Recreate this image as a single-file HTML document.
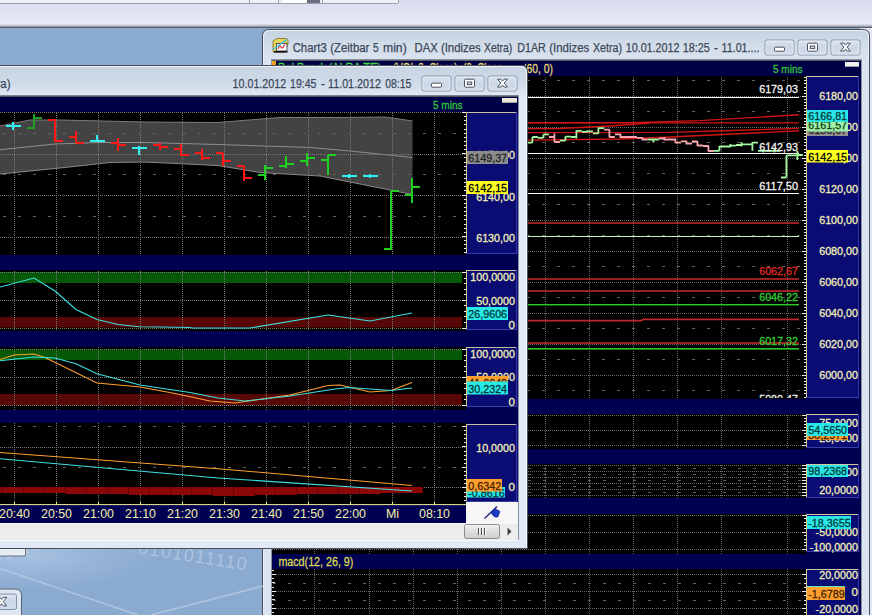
<!DOCTYPE html>
<html><head><meta charset="utf-8"><title>Chart3</title>
<style>
html,body{margin:0;padding:0;background:#dde0f0;overflow:hidden}
svg{display:block}
text{font-family:"Liberation Sans", sans-serif;}
.c{shape-rendering:crispEdges}
</style></head><body>
<svg width="872" height="615" viewBox="0 0 872 615">
<defs>
<linearGradient id="gtop" x1="0" y1="0" x2="0" y2="1"><stop offset="0" stop-color="#d8dbee"/><stop offset="0.85" stop-color="#e9ebf6"/><stop offset="1" stop-color="#e9ebf6"/></linearGradient>
<linearGradient id="gtitle" gradientUnits="userSpaceOnUse" x1="0" y1="30" x2="0" y2="60"><stop offset="0" stop-color="#c4d1e1"/><stop offset="0.5" stop-color="#d2dde9"/><stop offset="1" stop-color="#dae3ef"/></linearGradient>
<linearGradient id="gtitle2" gradientUnits="userSpaceOnUse" x1="0" y1="66" x2="0" y2="96"><stop offset="0" stop-color="#c8d4e2"/><stop offset="0.55" stop-color="#cedae8"/><stop offset="1" stop-color="#e0e8f3"/></linearGradient>
<linearGradient id="gbtn" x1="0" y1="0" x2="0" y2="1"><stop offset="0" stop-color="#dbe4f0"/><stop offset="0.5" stop-color="#ccd7e6"/><stop offset="1" stop-color="#d3dcea"/></linearGradient>
<linearGradient id="gthumb" x1="0" y1="0" x2="0" y2="1"><stop offset="0" stop-color="#f4f4f4"/><stop offset="0.5" stop-color="#dcdcdc"/><stop offset="1" stop-color="#cfcfcf"/></linearGradient>
<clipPath id="cpBack"><rect x="272" y="61" width="589" height="554"/></clipPath>
<clipPath id="cpFront"><rect x="0" y="97" width="518" height="426"/></clipPath>
</defs>

<rect x="0" y="0" width="872" height="28" fill="url(#gtop)" />
<rect x="0" y="0" width="398" height="3" fill="#eef0f6" class="c"/>
<line x1="0" y1="3.5" x2="398" y2="3.5" stroke="#9aa0b0" stroke-width="1" class="c"/>
<rect x="283" y="0" width="24" height="3" fill="#ffffff" class="c"/>
<rect x="307" y="0" width="13" height="3" fill="#6a6f80" class="c"/>
<line x1="249.5" y1="0" x2="249.5" y2="3" stroke="#9aa0b0" stroke-width="1" class="c"/>
<line x1="278.5" y1="0" x2="278.5" y2="3" stroke="#9aa0b0" stroke-width="1" class="c"/>
<line x1="322.5" y1="0" x2="322.5" y2="3" stroke="#9aa0b0" stroke-width="1" class="c"/>
<line x1="398.5" y1="0" x2="398.5" y2="3" stroke="#9aa0b0" stroke-width="1" class="c"/>
<rect x="0" y="24" width="872" height="1" fill="#d6d9e6" class="c"/>
<rect x="0" y="25" width="872" height="1" fill="#bec2ce" class="c"/>
<rect x="0" y="26" width="872" height="1" fill="#9498a2" class="c"/>
<rect x="0" y="27" width="872" height="1" fill="#5a5e66" class="c"/>
<rect x="262" y="28" width="610" height="1" fill="#4a4e56" class="c"/>
<rect x="0" y="28" width="872" height="587" fill="#8aaad0" />
<rect x="860" y="28" width="12" height="14" fill="#e2e5f2" />
<path d="M262.5 615 V36 Q262.5 29.5 269 29.5 H863 Q869.5 29.5 869.5 36 V615 Z" fill="url(#gtitle)" stroke="#4a4e58" stroke-width="1"/>
<path d="M263.5 615 V37 Q263.5 30.5 270 30.5 H862 Q868.5 30.5 868.5 37 V615" fill="none" stroke="#f4f7fb" stroke-width="1" opacity=".8"/>
<rect x="870" y="28" width="2" height="587" fill="#e2e5f2" />
<rect x="263.5" y="60" width="8" height="555" fill="#dbe5f2" />
<rect x="861" y="60" width="8" height="555" fill="#dbe5f2" />
<rect x="271" y="59" width="591" height="1" fill="#8a92a2" class="c"/>
<rect x="271" y="60" width="591" height="1" fill="#565a64" class="c"/>
<rect x="271" y="59" width="1" height="556" fill="#8a92a2" class="c"/>
<rect x="861" y="59" width="1" height="556" fill="#8c93a0" class="c"/>
<g>
<path d="M273 41 L277 38.5 H286.5 L288 40.5 V44 L284 52 H273 Z" fill="#e8d45c" stroke="#7a6a18" stroke-width=".8"/>
<rect x="276.5" y="43.5" width="10.5" height="7.5" fill="#fff" stroke="#333" stroke-width=".8"/>
<path d="M278 49 q1.5 -5 3 -2 t3.5 -2.5" fill="none" stroke="#e02020" stroke-width="1.1"/>
<path d="M273 49.5 L287 39.5" stroke="#20c0e8" stroke-width="1.2"/>
<rect x="274" y="51" width="13.5" height="1.6" fill="#111"/>
</g>
<text x="292.7" y="52" font-size="12.3" fill="#3c475a" stroke="#3c475a" stroke-width=".25" textLength="34" lengthAdjust="spacingAndGlyphs">Chart3</text>
<text x="330.3" y="52" font-size="12.3" fill="#3c475a" stroke="#3c475a" stroke-width=".25" textLength="39" lengthAdjust="spacingAndGlyphs">(Zeitbar</text>
<text x="373" y="52" font-size="12.3" fill="#3c475a" stroke="#3c475a" stroke-width=".25" textLength="5.6" lengthAdjust="spacingAndGlyphs">5</text>
<text x="383" y="52" font-size="12.3" fill="#3c475a" stroke="#3c475a" stroke-width=".25" textLength="23.7" lengthAdjust="spacingAndGlyphs">min)</text>
<text x="414.6" y="52" font-size="12.3" fill="#3c475a" stroke="#3c475a" stroke-width=".25" textLength="23.2" lengthAdjust="spacingAndGlyphs">DAX</text>
<text x="440.9" y="52" font-size="12.3" fill="#3c475a" stroke="#3c475a" stroke-width=".25" textLength="39.8" lengthAdjust="spacingAndGlyphs">(Indizes</text>
<text x="484" y="52" font-size="12.3" fill="#3c475a" stroke="#3c475a" stroke-width=".25" textLength="28.3" lengthAdjust="spacingAndGlyphs">Xetra)</text>
<text x="517.3" y="52" font-size="12.3" fill="#3c475a" stroke="#3c475a" stroke-width=".25" textLength="28.5" lengthAdjust="spacingAndGlyphs">D1AR</text>
<text x="549.3" y="52" font-size="12.3" fill="#3c475a" stroke="#3c475a" stroke-width=".25" textLength="39.9" lengthAdjust="spacingAndGlyphs">(Indizes</text>
<text x="593" y="52" font-size="12.3" fill="#3c475a" stroke="#3c475a" stroke-width=".25" textLength="29" lengthAdjust="spacingAndGlyphs">Xetra)</text>
<text x="625.7" y="52" font-size="12.3" fill="#3c475a" stroke="#3c475a" stroke-width=".25" textLength="53.8" lengthAdjust="spacingAndGlyphs">10.01.2012</text>
<text x="682.7" y="52" font-size="12.3" fill="#3c475a" stroke="#3c475a" stroke-width=".25" textLength="27" lengthAdjust="spacingAndGlyphs">18:25</text>
<text x="714" y="52" font-size="12.3" fill="#3c475a" stroke="#3c475a" stroke-width=".25" textLength="4" lengthAdjust="spacingAndGlyphs">-</text>
<text x="721.6" y="52" font-size="12.3" fill="#3c475a" stroke="#3c475a" stroke-width=".25" textLength="37.8" lengthAdjust="spacingAndGlyphs">11.01....</text>
<rect x="765.0" y="40.0" width="29" height="15" rx="2" fill="url(#gbtn)" stroke="#8794a8"/>
<rect x="766.0" y="41.0" width="27" height="13" rx="1.5" fill="none" stroke="#eef3f9" opacity=".7"/>
<rect x="774.5" y="47.2" width="10" height="4" rx="1" fill="#fff" stroke="#4a5262" stroke-width="1"/>
<rect x="798.0" y="40.0" width="29" height="15" rx="2" fill="url(#gbtn)" stroke="#8794a8"/>
<rect x="799.0" y="41.0" width="27" height="13" rx="1.5" fill="none" stroke="#eef3f9" opacity=".7"/>
<rect x="807.5" y="43.2" width="10" height="8" rx="1" fill="#fff" stroke="#4a5262" stroke-width="1"/>
<rect x="810.3" y="46.0" width="4.4" height="2.6" fill="#ccd6e4" stroke="#4a5262" stroke-width="1"/>
<rect x="831.0" y="40.0" width="29" height="15" rx="2" fill="url(#gbtn)" stroke="#8794a8"/>
<rect x="832.0" y="41.0" width="27" height="13" rx="1.5" fill="none" stroke="#eef3f9" opacity=".7"/>
<path d="M840.60 43.20 L843.90 43.20 L845.50 45.12 L847.10 43.20 L850.40 43.20 L847.15 47.10 L850.40 51.00 L847.10 51.00 L845.50 49.08 L843.90 51.00 L840.60 51.00 L843.85 47.10 Z" fill="#fff" stroke="#4a5262" stroke-width="1" stroke-linejoin="round"/>
<g clip-path="url(#cpBack)">
<rect x="271" y="60" width="590" height="555" fill="#000052" class="c"/>
<rect x="271" y="60" width="590" height="16" fill="#000048" class="c"/>
<rect x="271" y="76" width="535" height="323" fill="#000" class="c"/>
<rect x="271" y="414" width="535" height="35" fill="#000" class="c"/>
<rect x="271" y="464" width="535" height="34" fill="#000" class="c"/>
<rect x="271" y="514" width="535" height="40" fill="#000" class="c"/>
<rect x="271" y="569" width="535" height="46" fill="#000" class="c"/>
<rect x="806" y="76" width="53" height="322" fill="#0b0b74" class="c"/>
<rect x="806" y="414" width="53" height="34" fill="#0b0b74" class="c"/>
<rect x="806" y="464" width="53" height="34" fill="#0b0b74" class="c"/>
<rect x="806" y="514" width="53" height="38" fill="#0b0b74" class="c"/>
<rect x="806" y="569" width="53" height="47" fill="#0b0b74" class="c"/>
<line x1="314.5" y1="77" x2="314.5" y2="399" stroke="#666666" stroke-width="1" stroke-dasharray="1 1" class="c"/>
<line x1="369.5" y1="77" x2="369.5" y2="399" stroke="#666666" stroke-width="1" stroke-dasharray="1 1" class="c"/>
<line x1="413.5" y1="77" x2="413.5" y2="399" stroke="#666666" stroke-width="1" stroke-dasharray="1 1" class="c"/>
<line x1="457.5" y1="77" x2="457.5" y2="399" stroke="#666666" stroke-width="1" stroke-dasharray="1 1" class="c"/>
<line x1="501.5" y1="77" x2="501.5" y2="399" stroke="#666666" stroke-width="1" stroke-dasharray="1 1" class="c"/>
<line x1="545.5" y1="77" x2="545.5" y2="399" stroke="#666666" stroke-width="1" stroke-dasharray="1 1" class="c"/>
<line x1="589.5" y1="77" x2="589.5" y2="399" stroke="#666666" stroke-width="1" stroke-dasharray="1 1" class="c"/>
<line x1="633.5" y1="77" x2="633.5" y2="399" stroke="#666666" stroke-width="1" stroke-dasharray="1 1" class="c"/>
<line x1="677.5" y1="77" x2="677.5" y2="399" stroke="#666666" stroke-width="1" stroke-dasharray="1 1" class="c"/>
<line x1="721.5" y1="77" x2="721.5" y2="399" stroke="#666666" stroke-width="1" stroke-dasharray="1 1" class="c"/>
<line x1="787.5" y1="77" x2="787.5" y2="399" stroke="#666666" stroke-width="1" stroke-dasharray="1 1" class="c"/>
<line x1="314.5" y1="415" x2="314.5" y2="449" stroke="#666666" stroke-width="1" stroke-dasharray="1 1" class="c"/>
<line x1="369.5" y1="415" x2="369.5" y2="449" stroke="#666666" stroke-width="1" stroke-dasharray="1 1" class="c"/>
<line x1="413.5" y1="415" x2="413.5" y2="449" stroke="#666666" stroke-width="1" stroke-dasharray="1 1" class="c"/>
<line x1="457.5" y1="415" x2="457.5" y2="449" stroke="#666666" stroke-width="1" stroke-dasharray="1 1" class="c"/>
<line x1="501.5" y1="415" x2="501.5" y2="449" stroke="#666666" stroke-width="1" stroke-dasharray="1 1" class="c"/>
<line x1="545.5" y1="415" x2="545.5" y2="449" stroke="#666666" stroke-width="1" stroke-dasharray="1 1" class="c"/>
<line x1="589.5" y1="415" x2="589.5" y2="449" stroke="#666666" stroke-width="1" stroke-dasharray="1 1" class="c"/>
<line x1="633.5" y1="415" x2="633.5" y2="449" stroke="#666666" stroke-width="1" stroke-dasharray="1 1" class="c"/>
<line x1="677.5" y1="415" x2="677.5" y2="449" stroke="#666666" stroke-width="1" stroke-dasharray="1 1" class="c"/>
<line x1="721.5" y1="415" x2="721.5" y2="449" stroke="#666666" stroke-width="1" stroke-dasharray="1 1" class="c"/>
<line x1="787.5" y1="415" x2="787.5" y2="449" stroke="#666666" stroke-width="1" stroke-dasharray="1 1" class="c"/>
<line x1="314.5" y1="465" x2="314.5" y2="498" stroke="#666666" stroke-width="1" stroke-dasharray="1 1" class="c"/>
<line x1="369.5" y1="465" x2="369.5" y2="498" stroke="#666666" stroke-width="1" stroke-dasharray="1 1" class="c"/>
<line x1="413.5" y1="465" x2="413.5" y2="498" stroke="#666666" stroke-width="1" stroke-dasharray="1 1" class="c"/>
<line x1="457.5" y1="465" x2="457.5" y2="498" stroke="#666666" stroke-width="1" stroke-dasharray="1 1" class="c"/>
<line x1="501.5" y1="465" x2="501.5" y2="498" stroke="#666666" stroke-width="1" stroke-dasharray="1 1" class="c"/>
<line x1="545.5" y1="465" x2="545.5" y2="498" stroke="#666666" stroke-width="1" stroke-dasharray="1 1" class="c"/>
<line x1="589.5" y1="465" x2="589.5" y2="498" stroke="#666666" stroke-width="1" stroke-dasharray="1 1" class="c"/>
<line x1="633.5" y1="465" x2="633.5" y2="498" stroke="#666666" stroke-width="1" stroke-dasharray="1 1" class="c"/>
<line x1="677.5" y1="465" x2="677.5" y2="498" stroke="#666666" stroke-width="1" stroke-dasharray="1 1" class="c"/>
<line x1="721.5" y1="465" x2="721.5" y2="498" stroke="#666666" stroke-width="1" stroke-dasharray="1 1" class="c"/>
<line x1="787.5" y1="465" x2="787.5" y2="498" stroke="#666666" stroke-width="1" stroke-dasharray="1 1" class="c"/>
<line x1="314.5" y1="515" x2="314.5" y2="554" stroke="#666666" stroke-width="1" stroke-dasharray="1 1" class="c"/>
<line x1="369.5" y1="515" x2="369.5" y2="554" stroke="#666666" stroke-width="1" stroke-dasharray="1 1" class="c"/>
<line x1="413.5" y1="515" x2="413.5" y2="554" stroke="#666666" stroke-width="1" stroke-dasharray="1 1" class="c"/>
<line x1="457.5" y1="515" x2="457.5" y2="554" stroke="#666666" stroke-width="1" stroke-dasharray="1 1" class="c"/>
<line x1="501.5" y1="515" x2="501.5" y2="554" stroke="#666666" stroke-width="1" stroke-dasharray="1 1" class="c"/>
<line x1="545.5" y1="515" x2="545.5" y2="554" stroke="#666666" stroke-width="1" stroke-dasharray="1 1" class="c"/>
<line x1="589.5" y1="515" x2="589.5" y2="554" stroke="#666666" stroke-width="1" stroke-dasharray="1 1" class="c"/>
<line x1="633.5" y1="515" x2="633.5" y2="554" stroke="#666666" stroke-width="1" stroke-dasharray="1 1" class="c"/>
<line x1="677.5" y1="515" x2="677.5" y2="554" stroke="#666666" stroke-width="1" stroke-dasharray="1 1" class="c"/>
<line x1="721.5" y1="515" x2="721.5" y2="554" stroke="#666666" stroke-width="1" stroke-dasharray="1 1" class="c"/>
<line x1="787.5" y1="515" x2="787.5" y2="554" stroke="#666666" stroke-width="1" stroke-dasharray="1 1" class="c"/>
<line x1="314.5" y1="569" x2="314.5" y2="615" stroke="#666666" stroke-width="1" stroke-dasharray="1 1" class="c"/>
<line x1="369.5" y1="569" x2="369.5" y2="615" stroke="#666666" stroke-width="1" stroke-dasharray="1 1" class="c"/>
<line x1="413.5" y1="569" x2="413.5" y2="615" stroke="#666666" stroke-width="1" stroke-dasharray="1 1" class="c"/>
<line x1="457.5" y1="569" x2="457.5" y2="615" stroke="#666666" stroke-width="1" stroke-dasharray="1 1" class="c"/>
<line x1="501.5" y1="569" x2="501.5" y2="615" stroke="#666666" stroke-width="1" stroke-dasharray="1 1" class="c"/>
<line x1="545.5" y1="569" x2="545.5" y2="615" stroke="#666666" stroke-width="1" stroke-dasharray="1 1" class="c"/>
<line x1="589.5" y1="569" x2="589.5" y2="615" stroke="#666666" stroke-width="1" stroke-dasharray="1 1" class="c"/>
<line x1="633.5" y1="569" x2="633.5" y2="615" stroke="#666666" stroke-width="1" stroke-dasharray="1 1" class="c"/>
<line x1="677.5" y1="569" x2="677.5" y2="615" stroke="#666666" stroke-width="1" stroke-dasharray="1 1" class="c"/>
<line x1="721.5" y1="569" x2="721.5" y2="615" stroke="#666666" stroke-width="1" stroke-dasharray="1 1" class="c"/>
<line x1="787.5" y1="569" x2="787.5" y2="615" stroke="#666666" stroke-width="1" stroke-dasharray="1 1" class="c"/>
<line x1="272" y1="96.5" x2="802" y2="96.5" stroke="#666666" stroke-width="1" stroke-dasharray="1 1" class="c"/>
<line x1="272" y1="127.5" x2="802" y2="127.5" stroke="#666666" stroke-width="1" stroke-dasharray="1 1" class="c"/>
<line x1="272" y1="158.5" x2="802" y2="158.5" stroke="#666666" stroke-width="1" stroke-dasharray="1 1" class="c"/>
<line x1="272" y1="189.5" x2="802" y2="189.5" stroke="#666666" stroke-width="1" stroke-dasharray="1 1" class="c"/>
<line x1="272" y1="220.5" x2="802" y2="220.5" stroke="#666666" stroke-width="1" stroke-dasharray="1 1" class="c"/>
<line x1="272" y1="251.5" x2="802" y2="251.5" stroke="#666666" stroke-width="1" stroke-dasharray="1 1" class="c"/>
<line x1="272" y1="282.5" x2="802" y2="282.5" stroke="#666666" stroke-width="1" stroke-dasharray="1 1" class="c"/>
<line x1="272" y1="313.5" x2="802" y2="313.5" stroke="#666666" stroke-width="1" stroke-dasharray="1 1" class="c"/>
<line x1="272" y1="344.5" x2="802" y2="344.5" stroke="#666666" stroke-width="1" stroke-dasharray="1 1" class="c"/>
<line x1="272" y1="375.5" x2="802" y2="375.5" stroke="#666666" stroke-width="1" stroke-dasharray="1 1" class="c"/>
<line x1="257" y1="80.5" x2="802" y2="80.5" stroke="#606060" stroke-width="1" stroke-dasharray="3 12" class="c"/>
<line x1="257" y1="111.5" x2="802" y2="111.5" stroke="#606060" stroke-width="1" stroke-dasharray="3 12" class="c"/>
<line x1="257" y1="142.5" x2="802" y2="142.5" stroke="#606060" stroke-width="1" stroke-dasharray="3 12" class="c"/>
<line x1="257" y1="173.5" x2="802" y2="173.5" stroke="#606060" stroke-width="1" stroke-dasharray="3 12" class="c"/>
<line x1="257" y1="204.5" x2="802" y2="204.5" stroke="#606060" stroke-width="1" stroke-dasharray="3 12" class="c"/>
<line x1="257" y1="235.5" x2="802" y2="235.5" stroke="#606060" stroke-width="1" stroke-dasharray="3 12" class="c"/>
<line x1="257" y1="266.5" x2="802" y2="266.5" stroke="#606060" stroke-width="1" stroke-dasharray="3 12" class="c"/>
<line x1="257" y1="297.5" x2="802" y2="297.5" stroke="#606060" stroke-width="1" stroke-dasharray="3 12" class="c"/>
<line x1="257" y1="328.5" x2="802" y2="328.5" stroke="#606060" stroke-width="1" stroke-dasharray="3 12" class="c"/>
<line x1="257" y1="359.5" x2="802" y2="359.5" stroke="#606060" stroke-width="1" stroke-dasharray="3 12" class="c"/>
<line x1="257" y1="390.5" x2="802" y2="390.5" stroke="#606060" stroke-width="1" stroke-dasharray="3 12" class="c"/>
<line x1="272" y1="415.5" x2="802" y2="415.5" stroke="#666666" stroke-width="1" stroke-dasharray="1 1" class="c"/>
<line x1="272" y1="430.5" x2="802" y2="430.5" stroke="#666666" stroke-width="1" stroke-dasharray="1 1" class="c"/>
<line x1="272" y1="445.5" x2="802" y2="445.5" stroke="#666666" stroke-width="1" stroke-dasharray="1 1" class="c"/>
<line x1="272" y1="465.5" x2="802" y2="465.5" stroke="#666666" stroke-width="1" stroke-dasharray="1 1" class="c"/>
<line x1="272" y1="471.5" x2="802" y2="471.5" stroke="#666666" stroke-width="1" stroke-dasharray="1 1" class="c"/>
<line x1="272" y1="477.5" x2="802" y2="477.5" stroke="#666666" stroke-width="1" stroke-dasharray="1 1" class="c"/>
<line x1="272" y1="483.5" x2="802" y2="483.5" stroke="#666666" stroke-width="1" stroke-dasharray="1 1" class="c"/>
<line x1="272" y1="489.5" x2="802" y2="489.5" stroke="#666666" stroke-width="1" stroke-dasharray="1 1" class="c"/>
<line x1="272" y1="495.5" x2="802" y2="495.5" stroke="#666666" stroke-width="1" stroke-dasharray="1 1" class="c"/>
<line x1="258" y1="468.5" x2="802" y2="468.5" stroke="#606060" stroke-width="1" stroke-dasharray="3 12" class="c"/>
<line x1="258" y1="474.5" x2="802" y2="474.5" stroke="#606060" stroke-width="1" stroke-dasharray="3 12" class="c"/>
<line x1="258" y1="480.5" x2="802" y2="480.5" stroke="#606060" stroke-width="1" stroke-dasharray="3 12" class="c"/>
<line x1="258" y1="486.5" x2="802" y2="486.5" stroke="#606060" stroke-width="1" stroke-dasharray="3 12" class="c"/>
<line x1="258" y1="492.5" x2="802" y2="492.5" stroke="#606060" stroke-width="1" stroke-dasharray="3 12" class="c"/>
<line x1="272" y1="515.5" x2="802" y2="515.5" stroke="#666666" stroke-width="1" stroke-dasharray="1 1" class="c"/>
<line x1="272" y1="532.5" x2="802" y2="532.5" stroke="#666666" stroke-width="1" stroke-dasharray="1 1" class="c"/>
<line x1="272" y1="549.5" x2="802" y2="549.5" stroke="#666666" stroke-width="1" stroke-dasharray="1 1" class="c"/>
<line x1="272" y1="574.5" x2="802" y2="574.5" stroke="#666666" stroke-width="1" stroke-dasharray="1 1" class="c"/>
<line x1="272" y1="591.5" x2="802" y2="591.5" stroke="#666666" stroke-width="1" stroke-dasharray="1 1" class="c"/>
<line x1="272" y1="608.5" x2="802" y2="608.5" stroke="#666666" stroke-width="1" stroke-dasharray="1 1" class="c"/>
<line x1="258" y1="583.5" x2="802" y2="583.5" stroke="#606060" stroke-width="1" stroke-dasharray="3 12" class="c"/>
<line x1="258" y1="600.5" x2="802" y2="600.5" stroke="#606060" stroke-width="1" stroke-dasharray="3 12" class="c"/>
<line x1="271" y1="97.5" x2="799" y2="97.5" stroke="#fff" stroke-width="1" class="c"/>
<line x1="271" y1="153.5" x2="799" y2="153.5" stroke="#fff" stroke-width="1" class="c"/>
<line x1="271" y1="193.5" x2="799" y2="193.5" stroke="#fff" stroke-width="1" class="c"/>
<rect x="271" y="222.2" width="528" height="1.6" fill="#c02828" />
<line x1="271" y1="236.5" x2="799" y2="236.5" stroke="#c0f4b0" stroke-width="1" class="c"/>
<rect x="271" y="278.2" width="528" height="1.6" fill="#c02828" />
<rect x="271" y="290.2" width="528" height="1.6" fill="#c02828" />
<rect x="271" y="304" width="528" height="1" fill="#2cc82c" class="c"/>
<rect x="271" y="305" width="528" height="1" fill="#145c14" class="c"/>
<polyline points="271,320.7 641,320.7 643.5,319.3 799,319.3" stroke="#c02828" stroke-width="1.8" fill="none" />
<rect x="271" y="342.2" width="528" height="1.6" fill="#c02828" />
<rect x="271" y="348" width="528" height="1" fill="#2cc82c" class="c"/>
<rect x="271" y="349" width="528" height="1" fill="#1c801c" class="c"/>
<polyline points="271,122.6 632,122.6 700,120.6 799,114.8" stroke="#d41414" stroke-width="1.4" fill="none" />
<polyline points="271,122.9 799,122.9" stroke="#d41414" stroke-width="1.3" fill="none" />
<polyline points="271,130.3 560,128.5 610,126 650,123.2" stroke="#d41414" stroke-width="1.3" fill="none" />
<polyline points="271,132.9 670,132.4 799,128.4" stroke="#d41414" stroke-width="1.4" fill="none" />
<polyline points="271,143.3 620,139 670,137 799,130.8" stroke="#d41414" stroke-width="1.4" fill="none" />
<path d="M532.4 137 V142.6 M526.9 142.6 H532.4 M532.4 137 H537.9" stroke="#a4f8a0" stroke-width="1.8" fill="none"/>
<path d="M543.4 134.4 V137.9 M537.9 137.9 H543.4 M543.4 134.4 H548.9" stroke="#a4f8a0" stroke-width="1.8" fill="none"/>
<path d="M554.4 133.4 V142 M548.9 137 H554.4 M554.4 142 H559.9" stroke="#f8a8b0" stroke-width="1.8" fill="none"/>
<path d="M565.4 136.6 V140.6 M559.9 140.6 H565.4 M565.4 136.6 H570.9" stroke="#a4f8a0" stroke-width="1.8" fill="none"/>
<path d="M576.4 130.3 V138.5 M570.9 137 H576.4 M576.4 130.9 H581.9" stroke="#a4f8a0" stroke-width="1.8" fill="none"/>
<path d="M587.4 130.3 V132.3 M581.9 131.9 H587.4 M587.4 131.3 H592.9" stroke="#a4f8a0" stroke-width="1.8" fill="none"/>
<path d="M598.4 127.2 V133.4 M592.9 133.4 H598.4 M598.4 128.2 H603.9" stroke="#a4f8a0" stroke-width="1.8" fill="none"/>
<path d="M609.4 129.2 V137.5 M603.9 129.6 H609.4 M609.4 137 H614.9" stroke="#f8a8b0" stroke-width="1.8" fill="none"/>
<path d="M620.4 133.4 V137.9 M614.9 134.4 H620.4 M620.4 137 H625.9" stroke="#f8a8b0" stroke-width="1.8" fill="none"/>
<path d="M631.4 136.5 V137.5 M625.9 137 H631.4 M631.4 137 H636.9" stroke="#f8a8b0" stroke-width="1.8" fill="none"/>
<path d="M642.4 137.5 V140.6 M636.9 137.9 H642.4 M642.4 139.5 H647.9" stroke="#f8a8b0" stroke-width="1.8" fill="none"/>
<path d="M653.4 139.1 V142.6 M647.9 139.5 H653.4 M653.4 139.5 H658.9" stroke="#a4f8a0" stroke-width="1.8" fill="none"/>
<path d="M664.4 137 V140.6 M658.9 138.5 H664.4 M664.4 139.5 H669.9" stroke="#f8a8b0" stroke-width="1.8" fill="none"/>
<path d="M675.4 138.5 V143.3 M669.9 139.5 H675.4 M675.4 142.6 H680.9" stroke="#f8a8b0" stroke-width="1.8" fill="none"/>
<path d="M686.4 140.5 V144.5 M680.9 141.3 H686.4 M686.4 143.5 H691.9" stroke="#f8a8b0" stroke-width="1.8" fill="none"/>
<path d="M697.4 141 V146 M691.9 141.5 H697.4 M697.4 145.5 H702.9" stroke="#f8a8b0" stroke-width="1.8" fill="none"/>
<path d="M708.4 145.6 V151.6 M702.9 146 H708.4 M708.4 151 H713.9" stroke="#f8a8b0" stroke-width="1.8" fill="none"/>
<path d="M719.4 146.1 V151.1 M713.9 150.8 H719.4 M719.4 146.5 H724.9" stroke="#a4f8a0" stroke-width="1.8" fill="none"/>
<path d="M730.4 143.9 V147.3 M724.9 146.5 H730.4 M730.4 145.6 H735.9" stroke="#a4f8a0" stroke-width="1.8" fill="none"/>
<path d="M741.4 142.2 V146.5 M735.9 145 H741.4 M741.4 144.4 H746.9" stroke="#a4f8a0" stroke-width="1.8" fill="none"/>
<path d="M752.4 142 V150.8 M746.9 144.4 H752.4 M752.4 142.7 H757.9" stroke="#a4f8a0" stroke-width="1.8" fill="none"/>
<path d="M763.4 149 V152.5 M757.9 150.8 H763.4 M763.4 150.8 H768.9" stroke="#a4f8a0" stroke-width="1.8" fill="none"/>
<path d="M774.4 149 V152.5 M768.9 150.8 H774.4 M774.4 150.8 H779.9" stroke="#a4f8a0" stroke-width="1.8" fill="none"/>
<path d="M786.4 155.4 V177.5 M780.9 177.5 H786.4 M786.4 155.4 H791.9" stroke="#a4f8a0" stroke-width="1.8" fill="none"/>
<path d="M797.4 150.8 V160 M791.9 155.4 H797.4 M797.4 155 H802.9" stroke="#a4f8a0" stroke-width="1.8" fill="none"/>
<text x="798" y="93" font-size="11.6" fill="#f4f4f4" text-anchor="end"  textLength="38.8" lengthAdjust="spacingAndGlyphs" stroke="#f4f4f4" stroke-width=".3">6179,03</text>
<text x="798" y="151" font-size="11.6" fill="#f4f4f4" text-anchor="end"  textLength="38.8" lengthAdjust="spacingAndGlyphs" stroke="#f4f4f4" stroke-width=".3">6142,93</text>
<text x="798" y="190" font-size="11.6" fill="#f4f4f4" text-anchor="end"  textLength="38.8" lengthAdjust="spacingAndGlyphs" stroke="#f4f4f4" stroke-width=".3">6117,50</text>
<text x="798" y="275" font-size="11.6" fill="#e02828" text-anchor="end"  textLength="38.8" lengthAdjust="spacingAndGlyphs" stroke="#e02828" stroke-width=".3">6062,67</text>
<text x="798" y="301" font-size="11.6" fill="#30d030" text-anchor="end"  textLength="38.8" lengthAdjust="spacingAndGlyphs" stroke="#30d030" stroke-width=".3">6046,22</text>
<text x="798" y="345" font-size="11.6" fill="#30d030" text-anchor="end"  textLength="38.8" lengthAdjust="spacingAndGlyphs" stroke="#30d030" stroke-width=".3">6017,32</text>
<clipPath id="cpMain"><rect x="271" y="76" width="535" height="322"/></clipPath>
<text x="798" y="403.3" font-size="11.6" fill="#f4f4f4" text-anchor="end" clip-path="url(#cpMain)" textLength="38.8" lengthAdjust="spacingAndGlyphs" stroke="#f4f4f4" stroke-width=".3">5980,47</text>
<text x="773" y="72.5" font-size="11.8" fill="#30c838" text-anchor="start" textLength="29.5" lengthAdjust="spacingAndGlyphs" stroke="#30c838" stroke-width=".3">5 mins</text>
<text x="523" y="73" font-size="12.3" fill="#e6dc70" text-anchor="start" textLength="30" lengthAdjust="spacingAndGlyphs" stroke="#e6dc70" stroke-width=".3">(60, 0)</text>
<rect x="845" y="62" width="14" height="5" fill="#f2f2f2" class="c"/>
<rect x="845" y="66" width="14" height="1" fill="#a0a0a0" class="c"/>
<rect x="272" y="61" width="4" height="5" fill="#f0a020" class="c"/>
<text x="278" y="72.2" font-size="12.3" fill="#40d848" text-anchor="start" textLength="103" lengthAdjust="spacingAndGlyphs" stroke="#40d848" stroke-width=".3">Bol Bands(ALRA TE)</text>
<text x="393" y="72.2" font-size="12.3" fill="#e6dc70" text-anchor="start" textLength="112" lengthAdjust="spacingAndGlyphs" stroke="#e6dc70" stroke-width=".3">(VOL 2, Close), (2, Close,</text>
<text x="278.4" y="566" font-size="12.3" fill="#dcd850" text-anchor="start" textLength="75" lengthAdjust="spacingAndGlyphs" stroke="#dcd850" stroke-width=".3">macd(12, 26, 9)</text>
<rect x="806" y="76" width="1" height="322" fill="#d8c890" class="c"/>
<rect x="806" y="76" width="53" height="1" fill="#d0c8a0" class="c"/>
<rect x="858" y="76" width="1" height="322" fill="#3038a0" class="c"/>
<rect x="806" y="397" width="53" height="1" fill="#3840a8" class="c"/>
<rect x="806" y="414" width="1" height="34" fill="#d8c890" class="c"/>
<rect x="806" y="414" width="53" height="1" fill="#d0c8a0" class="c"/>
<rect x="858" y="414" width="1" height="34" fill="#3038a0" class="c"/>
<rect x="806" y="447" width="53" height="1" fill="#3840a8" class="c"/>
<rect x="806" y="464" width="1" height="34" fill="#d8c890" class="c"/>
<rect x="806" y="464" width="53" height="1" fill="#d0c8a0" class="c"/>
<rect x="858" y="464" width="1" height="34" fill="#3038a0" class="c"/>
<rect x="806" y="497" width="53" height="1" fill="#3840a8" class="c"/>
<rect x="806" y="514" width="1" height="38" fill="#d8c890" class="c"/>
<rect x="806" y="514" width="53" height="1" fill="#d0c8a0" class="c"/>
<rect x="858" y="514" width="1" height="38" fill="#3038a0" class="c"/>
<rect x="806" y="551" width="53" height="1" fill="#3840a8" class="c"/>
<rect x="806" y="569" width="1" height="47" fill="#d8c890" class="c"/>
<rect x="806" y="569" width="53" height="1" fill="#d0c8a0" class="c"/>
<rect x="858" y="569" width="1" height="47" fill="#3038a0" class="c"/>
<rect x="804" y="77" width="2" height="1" fill="#f0f0f0" class="c"/>
<rect x="804" y="80" width="2" height="1" fill="#f0f0f0" class="c"/>
<rect x="804" y="83" width="2" height="1" fill="#f0f0f0" class="c"/>
<rect x="804" y="87" width="2" height="1" fill="#f0f0f0" class="c"/>
<rect x="804" y="90" width="2" height="1" fill="#f0f0f0" class="c"/>
<rect x="804" y="93" width="2" height="1" fill="#f0f0f0" class="c"/>
<rect x="802" y="96" width="4" height="1" fill="#f0f0f0" class="c"/>
<rect x="804" y="99" width="2" height="1" fill="#f0f0f0" class="c"/>
<rect x="804" y="102" width="2" height="1" fill="#f0f0f0" class="c"/>
<rect x="804" y="105" width="2" height="1" fill="#f0f0f0" class="c"/>
<rect x="804" y="108" width="2" height="1" fill="#f0f0f0" class="c"/>
<rect x="804" y="111" width="2" height="1" fill="#f0f0f0" class="c"/>
<rect x="804" y="114" width="2" height="1" fill="#f0f0f0" class="c"/>
<rect x="804" y="118" width="2" height="1" fill="#f0f0f0" class="c"/>
<rect x="804" y="121" width="2" height="1" fill="#f0f0f0" class="c"/>
<rect x="804" y="124" width="2" height="1" fill="#f0f0f0" class="c"/>
<rect x="802" y="127" width="4" height="1" fill="#f0f0f0" class="c"/>
<rect x="804" y="130" width="2" height="1" fill="#f0f0f0" class="c"/>
<rect x="804" y="133" width="2" height="1" fill="#f0f0f0" class="c"/>
<rect x="804" y="136" width="2" height="1" fill="#f0f0f0" class="c"/>
<rect x="804" y="139" width="2" height="1" fill="#f0f0f0" class="c"/>
<rect x="804" y="142" width="2" height="1" fill="#f0f0f0" class="c"/>
<rect x="804" y="145" width="2" height="1" fill="#f0f0f0" class="c"/>
<rect x="804" y="149" width="2" height="1" fill="#f0f0f0" class="c"/>
<rect x="804" y="152" width="2" height="1" fill="#f0f0f0" class="c"/>
<rect x="804" y="155" width="2" height="1" fill="#f0f0f0" class="c"/>
<rect x="802" y="158" width="4" height="1" fill="#f0f0f0" class="c"/>
<rect x="804" y="161" width="2" height="1" fill="#f0f0f0" class="c"/>
<rect x="804" y="164" width="2" height="1" fill="#f0f0f0" class="c"/>
<rect x="804" y="167" width="2" height="1" fill="#f0f0f0" class="c"/>
<rect x="804" y="170" width="2" height="1" fill="#f0f0f0" class="c"/>
<rect x="804" y="173" width="2" height="1" fill="#f0f0f0" class="c"/>
<rect x="804" y="176" width="2" height="1" fill="#f0f0f0" class="c"/>
<rect x="804" y="180" width="2" height="1" fill="#f0f0f0" class="c"/>
<rect x="804" y="183" width="2" height="1" fill="#f0f0f0" class="c"/>
<rect x="804" y="186" width="2" height="1" fill="#f0f0f0" class="c"/>
<rect x="802" y="189" width="4" height="1" fill="#f0f0f0" class="c"/>
<rect x="804" y="192" width="2" height="1" fill="#f0f0f0" class="c"/>
<rect x="804" y="195" width="2" height="1" fill="#f0f0f0" class="c"/>
<rect x="804" y="198" width="2" height="1" fill="#f0f0f0" class="c"/>
<rect x="804" y="201" width="2" height="1" fill="#f0f0f0" class="c"/>
<rect x="804" y="204" width="2" height="1" fill="#f0f0f0" class="c"/>
<rect x="804" y="207" width="2" height="1" fill="#f0f0f0" class="c"/>
<rect x="804" y="211" width="2" height="1" fill="#f0f0f0" class="c"/>
<rect x="804" y="214" width="2" height="1" fill="#f0f0f0" class="c"/>
<rect x="804" y="217" width="2" height="1" fill="#f0f0f0" class="c"/>
<rect x="802" y="220" width="4" height="1" fill="#f0f0f0" class="c"/>
<rect x="804" y="223" width="2" height="1" fill="#f0f0f0" class="c"/>
<rect x="804" y="226" width="2" height="1" fill="#f0f0f0" class="c"/>
<rect x="804" y="229" width="2" height="1" fill="#f0f0f0" class="c"/>
<rect x="804" y="232" width="2" height="1" fill="#f0f0f0" class="c"/>
<rect x="804" y="235" width="2" height="1" fill="#f0f0f0" class="c"/>
<rect x="804" y="238" width="2" height="1" fill="#f0f0f0" class="c"/>
<rect x="804" y="242" width="2" height="1" fill="#f0f0f0" class="c"/>
<rect x="804" y="245" width="2" height="1" fill="#f0f0f0" class="c"/>
<rect x="804" y="248" width="2" height="1" fill="#f0f0f0" class="c"/>
<rect x="802" y="251" width="4" height="1" fill="#f0f0f0" class="c"/>
<rect x="804" y="254" width="2" height="1" fill="#f0f0f0" class="c"/>
<rect x="804" y="257" width="2" height="1" fill="#f0f0f0" class="c"/>
<rect x="804" y="260" width="2" height="1" fill="#f0f0f0" class="c"/>
<rect x="804" y="263" width="2" height="1" fill="#f0f0f0" class="c"/>
<rect x="804" y="266" width="2" height="1" fill="#f0f0f0" class="c"/>
<rect x="804" y="269" width="2" height="1" fill="#f0f0f0" class="c"/>
<rect x="804" y="273" width="2" height="1" fill="#f0f0f0" class="c"/>
<rect x="804" y="276" width="2" height="1" fill="#f0f0f0" class="c"/>
<rect x="804" y="279" width="2" height="1" fill="#f0f0f0" class="c"/>
<rect x="802" y="282" width="4" height="1" fill="#f0f0f0" class="c"/>
<rect x="804" y="285" width="2" height="1" fill="#f0f0f0" class="c"/>
<rect x="804" y="288" width="2" height="1" fill="#f0f0f0" class="c"/>
<rect x="804" y="291" width="2" height="1" fill="#f0f0f0" class="c"/>
<rect x="804" y="294" width="2" height="1" fill="#f0f0f0" class="c"/>
<rect x="804" y="297" width="2" height="1" fill="#f0f0f0" class="c"/>
<rect x="804" y="300" width="2" height="1" fill="#f0f0f0" class="c"/>
<rect x="804" y="304" width="2" height="1" fill="#f0f0f0" class="c"/>
<rect x="804" y="307" width="2" height="1" fill="#f0f0f0" class="c"/>
<rect x="804" y="310" width="2" height="1" fill="#f0f0f0" class="c"/>
<rect x="802" y="313" width="4" height="1" fill="#f0f0f0" class="c"/>
<rect x="804" y="316" width="2" height="1" fill="#f0f0f0" class="c"/>
<rect x="804" y="319" width="2" height="1" fill="#f0f0f0" class="c"/>
<rect x="804" y="322" width="2" height="1" fill="#f0f0f0" class="c"/>
<rect x="804" y="325" width="2" height="1" fill="#f0f0f0" class="c"/>
<rect x="804" y="328" width="2" height="1" fill="#f0f0f0" class="c"/>
<rect x="804" y="331" width="2" height="1" fill="#f0f0f0" class="c"/>
<rect x="804" y="335" width="2" height="1" fill="#f0f0f0" class="c"/>
<rect x="804" y="338" width="2" height="1" fill="#f0f0f0" class="c"/>
<rect x="804" y="341" width="2" height="1" fill="#f0f0f0" class="c"/>
<rect x="802" y="344" width="4" height="1" fill="#f0f0f0" class="c"/>
<rect x="804" y="347" width="2" height="1" fill="#f0f0f0" class="c"/>
<rect x="804" y="350" width="2" height="1" fill="#f0f0f0" class="c"/>
<rect x="804" y="353" width="2" height="1" fill="#f0f0f0" class="c"/>
<rect x="804" y="356" width="2" height="1" fill="#f0f0f0" class="c"/>
<rect x="804" y="359" width="2" height="1" fill="#f0f0f0" class="c"/>
<rect x="804" y="362" width="2" height="1" fill="#f0f0f0" class="c"/>
<rect x="804" y="366" width="2" height="1" fill="#f0f0f0" class="c"/>
<rect x="804" y="369" width="2" height="1" fill="#f0f0f0" class="c"/>
<rect x="804" y="372" width="2" height="1" fill="#f0f0f0" class="c"/>
<rect x="802" y="375" width="4" height="1" fill="#f0f0f0" class="c"/>
<rect x="804" y="378" width="2" height="1" fill="#f0f0f0" class="c"/>
<rect x="804" y="381" width="2" height="1" fill="#f0f0f0" class="c"/>
<rect x="804" y="384" width="2" height="1" fill="#f0f0f0" class="c"/>
<rect x="804" y="387" width="2" height="1" fill="#f0f0f0" class="c"/>
<rect x="804" y="390" width="2" height="1" fill="#f0f0f0" class="c"/>
<rect x="804" y="393" width="2" height="1" fill="#f0f0f0" class="c"/>
<rect x="804" y="397" width="2" height="1" fill="#f0f0f0" class="c"/>
<rect x="802" y="415" width="4" height="1" fill="#f0f0f0" class="c"/>
<rect x="804" y="418" width="2" height="1" fill="#f0f0f0" class="c"/>
<rect x="804" y="421" width="2" height="1" fill="#f0f0f0" class="c"/>
<rect x="804" y="424" width="2" height="1" fill="#f0f0f0" class="c"/>
<rect x="804" y="427" width="2" height="1" fill="#f0f0f0" class="c"/>
<rect x="802" y="430" width="4" height="1" fill="#f0f0f0" class="c"/>
<rect x="804" y="433" width="2" height="1" fill="#f0f0f0" class="c"/>
<rect x="804" y="436" width="2" height="1" fill="#f0f0f0" class="c"/>
<rect x="804" y="439" width="2" height="1" fill="#f0f0f0" class="c"/>
<rect x="804" y="442" width="2" height="1" fill="#f0f0f0" class="c"/>
<rect x="802" y="445" width="4" height="1" fill="#f0f0f0" class="c"/>
<rect x="802" y="465" width="4" height="1" fill="#f0f0f0" class="c"/>
<rect x="802" y="468" width="4" height="1" fill="#f0f0f0" class="c"/>
<rect x="802" y="471" width="4" height="1" fill="#f0f0f0" class="c"/>
<rect x="802" y="474" width="4" height="1" fill="#f0f0f0" class="c"/>
<rect x="802" y="477" width="4" height="1" fill="#f0f0f0" class="c"/>
<rect x="802" y="480" width="4" height="1" fill="#f0f0f0" class="c"/>
<rect x="802" y="483" width="4" height="1" fill="#f0f0f0" class="c"/>
<rect x="802" y="486" width="4" height="1" fill="#f0f0f0" class="c"/>
<rect x="802" y="489" width="4" height="1" fill="#f0f0f0" class="c"/>
<rect x="802" y="492" width="4" height="1" fill="#f0f0f0" class="c"/>
<rect x="802" y="495" width="4" height="1" fill="#f0f0f0" class="c"/>
<rect x="802" y="515" width="4" height="1" fill="#f0f0f0" class="c"/>
<rect x="804" y="518" width="2" height="1" fill="#f0f0f0" class="c"/>
<rect x="804" y="522" width="2" height="1" fill="#f0f0f0" class="c"/>
<rect x="804" y="525" width="2" height="1" fill="#f0f0f0" class="c"/>
<rect x="804" y="528" width="2" height="1" fill="#f0f0f0" class="c"/>
<rect x="802" y="532" width="4" height="1" fill="#f0f0f0" class="c"/>
<rect x="804" y="535" width="2" height="1" fill="#f0f0f0" class="c"/>
<rect x="804" y="539" width="2" height="1" fill="#f0f0f0" class="c"/>
<rect x="804" y="542" width="2" height="1" fill="#f0f0f0" class="c"/>
<rect x="804" y="545" width="2" height="1" fill="#f0f0f0" class="c"/>
<rect x="802" y="549" width="4" height="1" fill="#f0f0f0" class="c"/>
<rect x="802" y="574" width="4" height="1" fill="#f0f0f0" class="c"/>
<rect x="804" y="578" width="2" height="1" fill="#f0f0f0" class="c"/>
<rect x="804" y="583" width="2" height="1" fill="#f0f0f0" class="c"/>
<rect x="804" y="587" width="2" height="1" fill="#f0f0f0" class="c"/>
<rect x="802" y="591" width="4" height="1" fill="#f0f0f0" class="c"/>
<rect x="804" y="595" width="2" height="1" fill="#f0f0f0" class="c"/>
<rect x="804" y="600" width="2" height="1" fill="#f0f0f0" class="c"/>
<rect x="804" y="604" width="2" height="1" fill="#f0f0f0" class="c"/>
<rect x="802" y="608" width="4" height="1" fill="#f0f0f0" class="c"/>
<rect x="804" y="612" width="2" height="1" fill="#f0f0f0" class="c"/>
<rect x="272" y="570" width="2" height="1" fill="#f0f0f0" class="c"/>
<rect x="272" y="574" width="4" height="1" fill="#f0f0f0" class="c"/>
<rect x="272" y="578" width="2" height="1" fill="#f0f0f0" class="c"/>
<rect x="272" y="582" width="3" height="1" fill="#f0f0f0" class="c"/>
<rect x="272" y="587" width="2" height="1" fill="#f0f0f0" class="c"/>
<rect x="272" y="591" width="4" height="1" fill="#f0f0f0" class="c"/>
<rect x="272" y="595" width="2" height="1" fill="#f0f0f0" class="c"/>
<rect x="272" y="599" width="3" height="1" fill="#f0f0f0" class="c"/>
<rect x="272" y="604" width="2" height="1" fill="#f0f0f0" class="c"/>
<rect x="272" y="608" width="4" height="1" fill="#f0f0f0" class="c"/>
<rect x="272" y="612" width="2" height="1" fill="#f0f0f0" class="c"/>
<text x="858" y="100.4" font-size="11.6" fill="#f3f0b4" text-anchor="end"  textLength="38.8" lengthAdjust="spacingAndGlyphs" stroke="#f3f0b4" stroke-width=".3">6180,00</text>
<text x="858" y="131.4" font-size="11.6" fill="#f3f0b4" text-anchor="end"  textLength="38.8" lengthAdjust="spacingAndGlyphs" stroke="#f3f0b4" stroke-width=".3">6160,00</text>
<text x="858" y="162.4" font-size="11.6" fill="#f3f0b4" text-anchor="end"  textLength="38.8" lengthAdjust="spacingAndGlyphs" stroke="#f3f0b4" stroke-width=".3">6140,00</text>
<text x="858" y="193.4" font-size="11.6" fill="#f3f0b4" text-anchor="end"  textLength="38.8" lengthAdjust="spacingAndGlyphs" stroke="#f3f0b4" stroke-width=".3">6120,00</text>
<text x="858" y="224.4" font-size="11.6" fill="#f3f0b4" text-anchor="end"  textLength="38.8" lengthAdjust="spacingAndGlyphs" stroke="#f3f0b4" stroke-width=".3">6100,00</text>
<text x="858" y="255.4" font-size="11.6" fill="#f3f0b4" text-anchor="end"  textLength="38.8" lengthAdjust="spacingAndGlyphs" stroke="#f3f0b4" stroke-width=".3">6080,00</text>
<text x="858" y="286.4" font-size="11.6" fill="#f3f0b4" text-anchor="end"  textLength="38.8" lengthAdjust="spacingAndGlyphs" stroke="#f3f0b4" stroke-width=".3">6060,00</text>
<text x="858" y="317.4" font-size="11.6" fill="#f3f0b4" text-anchor="end"  textLength="38.8" lengthAdjust="spacingAndGlyphs" stroke="#f3f0b4" stroke-width=".3">6040,00</text>
<text x="858" y="348.4" font-size="11.6" fill="#f3f0b4" text-anchor="end"  textLength="38.8" lengthAdjust="spacingAndGlyphs" stroke="#f3f0b4" stroke-width=".3">6020,00</text>
<text x="858" y="379.4" font-size="11.6" fill="#f3f0b4" text-anchor="end"  textLength="38.8" lengthAdjust="spacingAndGlyphs" stroke="#f3f0b4" stroke-width=".3">6000,00</text>
<rect x="807" y="123" width="41" height="13" fill="#909090" />
<text x="808.3" y="134" font-size="11.6" fill="#222" text-anchor="start"  textLength="38.8" lengthAdjust="spacingAndGlyphs" stroke="#222" stroke-width=".3">6156,67</text>
<rect x="807" y="118.5" width="41" height="13" fill="#9ef0a8" />
<text x="808.3" y="128.8" font-size="11.6" fill="#104010" text-anchor="start"  textLength="38.8" lengthAdjust="spacingAndGlyphs" stroke="#104010" stroke-width=".3">6161,57</text>
<rect x="807" y="110" width="41" height="12" fill="#28e8e8" />
<text x="808.3" y="120.2" font-size="11.6" fill="#003838" text-anchor="start"  textLength="38.8" lengthAdjust="spacingAndGlyphs" stroke="#003838" stroke-width=".3">6166,81</text>
<rect x="807" y="150" width="41" height="12.5" fill="#ffff20" />
<text x="808.3" y="160.7" font-size="11.6" fill="#000" text-anchor="start"  textLength="38.8" lengthAdjust="spacingAndGlyphs" stroke="#000" stroke-width=".3">6142,15</text>
<text x="858" y="426.7" font-size="11.6" fill="#f3f0b4" text-anchor="end"  textLength="38.8" lengthAdjust="spacingAndGlyphs" stroke="#f3f0b4" stroke-width=".3">75,0000</text>
<text x="858" y="441.8" font-size="11.6" fill="#f3f0b4" text-anchor="end"  textLength="38.8" lengthAdjust="spacingAndGlyphs" stroke="#f3f0b4" stroke-width=".3">25,0000</text>
<rect x="807" y="427.5" width="41" height="12.5" fill="#ffa030" />
<text x="808.3" y="438.5" font-size="11.6" fill="#402000" text-anchor="start"  textLength="38.8" lengthAdjust="spacingAndGlyphs" stroke="#402000" stroke-width=".3">38,2971</text>
<rect x="807" y="423" width="41" height="13" fill="#28e8e8" />
<text x="808.3" y="434.2" font-size="11.6" fill="#003838" text-anchor="start"  textLength="38.8" lengthAdjust="spacingAndGlyphs" stroke="#003838" stroke-width=".3">54,5650</text>
<text x="858" y="475.5" font-size="11.6" fill="#f3f0b4" text-anchor="end"  textLength="44.7" lengthAdjust="spacingAndGlyphs" stroke="#f3f0b4" stroke-width=".3">100,0000</text>
<text x="858" y="493.7" font-size="11.6" fill="#f3f0b4" text-anchor="end"  textLength="38.8" lengthAdjust="spacingAndGlyphs" stroke="#f3f0b4" stroke-width=".3">20,0000</text>
<rect x="807" y="465" width="41" height="12" fill="#28e8e8" />
<text x="808.3" y="475.2" font-size="11.6" fill="#003838" text-anchor="start"  textLength="38.8" lengthAdjust="spacingAndGlyphs" stroke="#003838" stroke-width=".3">98,2368</text>
<text x="858" y="536.3" font-size="11.6" fill="#f3f0b4" text-anchor="end"  textLength="42.4" lengthAdjust="spacingAndGlyphs" stroke="#f3f0b4" stroke-width=".3">-50,0000</text>
<text x="858" y="550.8" font-size="11.6" fill="#f3f0b4" text-anchor="end"  textLength="48.3" lengthAdjust="spacingAndGlyphs" stroke="#f3f0b4" stroke-width=".3">-100,0000</text>
<rect x="807" y="516" width="44" height="13" fill="#28e8e8" />
<text x="808.3" y="527.2" font-size="11.6" fill="#003838" text-anchor="start"  textLength="42.4" lengthAdjust="spacingAndGlyphs" stroke="#003838" stroke-width=".3">-18,3655</text>
<text x="858" y="579.2" font-size="11.6" fill="#f3f0b4" text-anchor="end"  textLength="38.8" lengthAdjust="spacingAndGlyphs" stroke="#f3f0b4" stroke-width=".3">20,0000</text>
<text x="858" y="595.7" font-size="11.6" fill="#f3f0b4" text-anchor="end"  stroke="#f3f0b4" stroke-width=".3">0</text>
<text x="858" y="612.8" font-size="11.6" fill="#f3f0b4" text-anchor="end"  textLength="42.4" lengthAdjust="spacingAndGlyphs" stroke="#f3f0b4" stroke-width=".3">-20,0000</text>
<rect x="807" y="586" width="38" height="2" fill="#60e8c0" class="c"/>
<rect x="807" y="587" width="38" height="13" fill="#ffa030" />
<text x="808.3" y="598.2" font-size="11.6" fill="#402000" text-anchor="start"  textLength="36.4" lengthAdjust="spacingAndGlyphs" stroke="#402000" stroke-width=".3">-1,6789</text>
</g>
<defs><radialGradient id="glow" cx=".5" cy=".5" r=".5"><stop offset="0" stop-color="#a6c0e0"/><stop offset="1" stop-color="#8aaad0"/></radialGradient></defs>
<ellipse cx="30" cy="556" rx="130" ry="34" fill="url(#glow)"/>
<g opacity=".55">
<text x="0" y="0" font-size="18" fill="#c9d9ec" transform="translate(131,552.5) rotate(8.8)" letter-spacing="1.5">.0101011110</text>
<text x="0" y="0" font-size="14" fill="#c9d9ec" transform="translate(-4,562) rotate(-16)" letter-spacing="1.5">01010</text>
</g>
<path d="M0 568.5 L138 615 M263 586 L151 615" stroke="#b6cbe4" stroke-width="1.6" fill="none" opacity=".8"/>
<path d="M-2 548 H25.5 V555 Q25.5 556 24 556 H-2 Z" fill="#e8edf5" stroke="#6a7280"/>
<path d="M-2 589 H15 Q21.5 589 21.5 595.5 V616 H-2 Z" fill="#dde6f2" stroke="#5a626e"/>
<rect x="-6.5" y="594" width="23" height="15.5" rx="2" fill="url(#gbtn)" stroke="#8794a8"/>
<path d="M-3.40 597.40 L0.00 597.40 L1.60 599.44 L3.20 597.40 L6.60 597.40 L3.30 601.60 L6.60 605.80 L3.20 605.80 L1.60 603.76 L0.00 605.80 L-3.40 605.80 L-0.10 601.60 Z" fill="#fff" stroke="#4a5262" stroke-width="1" stroke-linejoin="round"/>
<path d="M-3 65.5 H521 Q527.5 65.5 527.5 72 V548.5 H-3 Z" fill="url(#gtitle2)" stroke="#4a4e58"/>
<path d="M0 66.5 H520 Q526.5 66.5 526.5 73 V547.5 H0" fill="none" stroke="#f6f9fc" opacity=".85"/>
<rect x="0" y="96" width="527" height="452" fill="#e0e9f5" />
<rect x="527" y="73" width="1" height="475" fill="#4a4e58" class="c"/>
<rect x="0" y="548" width="528" height="1" fill="#4a4e58" class="c"/>
<rect x="526" y="96" width="1" height="452" fill="#f6f9fc" class="c"/>
<rect x="0" y="95" width="519" height="1" fill="#7c8390" class="c"/>
<rect x="0" y="96" width="519" height="1" fill="#50545c" class="c"/>
<rect x="518" y="95" width="1" height="446" fill="#8c93a0" class="c"/>
<rect x="0" y="540" width="519" height="1" fill="#f8fafc" class="c"/>
<text x="-3.5" y="87.6" font-size="12.3" fill="#3c475a" stroke="#3c475a" stroke-width=".25" textLength="14" lengthAdjust="spacingAndGlyphs">ra)</text>
<text x="232.6" y="87.6" font-size="12.3" fill="#3c475a" stroke="#3c475a" stroke-width=".25" textLength="53.5" lengthAdjust="spacingAndGlyphs">10.01.2012</text>
<text x="290.1" y="87.6" font-size="12.3" fill="#3c475a" stroke="#3c475a" stroke-width=".25" textLength="26.3" lengthAdjust="spacingAndGlyphs">19:45</text>
<text x="320.9" y="87.6" font-size="12.3" fill="#3c475a" stroke="#3c475a" stroke-width=".25" textLength="3.9" lengthAdjust="spacingAndGlyphs">-</text>
<text x="328" y="87.6" font-size="12.3" fill="#3c475a" stroke="#3c475a" stroke-width=".25" textLength="53" lengthAdjust="spacingAndGlyphs">11.01.2012</text>
<text x="385.2" y="87.6" font-size="12.3" fill="#3c475a" stroke="#3c475a" stroke-width=".25" textLength="26" lengthAdjust="spacingAndGlyphs">08:15</text>
<rect x="422.0" y="76.0" width="29" height="15" rx="2" fill="url(#gbtn)" stroke="#8794a8"/>
<rect x="423.0" y="77.0" width="27" height="13" rx="1.5" fill="none" stroke="#eef3f9" opacity=".7"/>
<rect x="431.5" y="83.2" width="10" height="4" rx="1" fill="#fff" stroke="#4a5262" stroke-width="1"/>
<rect x="455.0" y="76.0" width="29" height="15" rx="2" fill="url(#gbtn)" stroke="#8794a8"/>
<rect x="456.0" y="77.0" width="27" height="13" rx="1.5" fill="none" stroke="#eef3f9" opacity=".7"/>
<rect x="464.5" y="79.2" width="10" height="8" rx="1" fill="#fff" stroke="#4a5262" stroke-width="1"/>
<rect x="467.3" y="82.0" width="4.4" height="2.6" fill="#ccd6e4" stroke="#4a5262" stroke-width="1"/>
<rect x="488.0" y="76.0" width="29" height="15" rx="2" fill="url(#gbtn)" stroke="#8794a8"/>
<rect x="489.0" y="77.0" width="27" height="13" rx="1.5" fill="none" stroke="#eef3f9" opacity=".7"/>
<path d="M497.60 79.20 L500.90 79.20 L502.50 81.12 L504.10 79.20 L507.40 79.20 L504.15 83.10 L507.40 87.00 L504.10 87.00 L502.50 85.08 L500.90 87.00 L497.60 87.00 L500.85 83.10 Z" fill="#fff" stroke="#4a5262" stroke-width="1" stroke-linejoin="round"/>
<g clip-path="url(#cpFront)">
<rect x="0" y="96" width="518" height="427" fill="#000052" class="c"/>
<rect x="0" y="96" width="518" height="16" fill="#000048" class="c"/>
<rect x="0" y="112" width="466" height="143" fill="#000" class="c"/>
<rect x="0" y="270" width="466" height="61" fill="#000" class="c"/>
<rect x="0" y="347" width="466" height="63" fill="#000" class="c"/>
<rect x="0" y="423" width="466" height="82" fill="#000" class="c"/>
<rect x="466" y="112" width="52" height="142" fill="#0b0b74" class="c"/>
<rect x="466" y="270" width="52" height="60" fill="#0b0b74" class="c"/>
<rect x="466" y="347" width="52" height="60" fill="#0b0b74" class="c"/>
<rect x="466" y="424" width="52" height="78" fill="#0b0b74" class="c"/>
<polygon points="0,126 30,120 60,120 145,122 218,122.5 280,117.5 340,117.5 385,117 412.5,121 412.5,194.5 390,190 320,176 260,172.5 218,165.5 145,162 110,162.5 60,168 0,174" fill="#434343"/>
<polyline points="0,126 30,120 60,120 145,122 218,122.5 280,117.5 340,117.5 385,117 412.5,121" stroke="#7c7c7c" stroke-width="1" fill="none" />
<polyline points="0,174 60,168 110,162.5 145,162 218,165.5 260,172.5 320,176 390,190 412.5,194.5" stroke="#8a8a8a" stroke-width="1" fill="none" />
<polyline points="0,149.7 55,144 100,142.5 145,142.5 218,144.5 310,147.5 350,151 412.5,157.5" stroke="#8e8e8e" stroke-width="1" fill="none" />
<rect x="0" y="272" width="462" height="11" fill="#055805" class="c"/>
<rect x="0" y="317" width="462" height="10.5" fill="#580707" />
<rect x="0" y="349.5" width="462" height="10.5" fill="#055805" />
<rect x="0" y="394" width="462" height="11.3" fill="#580707" />
<line x1="14.5" y1="113" x2="14.5" y2="255" stroke="#787878" stroke-width="1" stroke-dasharray="1 1" class="c"/>
<line x1="56.5" y1="113" x2="56.5" y2="255" stroke="#787878" stroke-width="1" stroke-dasharray="1 1" class="c"/>
<line x1="98.5" y1="113" x2="98.5" y2="255" stroke="#787878" stroke-width="1" stroke-dasharray="1 1" class="c"/>
<line x1="140.5" y1="113" x2="140.5" y2="255" stroke="#787878" stroke-width="1" stroke-dasharray="1 1" class="c"/>
<line x1="182.5" y1="113" x2="182.5" y2="255" stroke="#787878" stroke-width="1" stroke-dasharray="1 1" class="c"/>
<line x1="224.5" y1="113" x2="224.5" y2="255" stroke="#787878" stroke-width="1" stroke-dasharray="1 1" class="c"/>
<line x1="266.5" y1="113" x2="266.5" y2="255" stroke="#787878" stroke-width="1" stroke-dasharray="1 1" class="c"/>
<line x1="308.5" y1="113" x2="308.5" y2="255" stroke="#787878" stroke-width="1" stroke-dasharray="1 1" class="c"/>
<line x1="350.5" y1="113" x2="350.5" y2="255" stroke="#787878" stroke-width="1" stroke-dasharray="1 1" class="c"/>
<line x1="392.5" y1="113" x2="392.5" y2="255" stroke="#787878" stroke-width="1" stroke-dasharray="1 1" class="c"/>
<line x1="434.5" y1="113" x2="434.5" y2="255" stroke="#787878" stroke-width="1" stroke-dasharray="1 1" class="c"/>
<line x1="14.5" y1="271" x2="14.5" y2="331" stroke="#787878" stroke-width="1" stroke-dasharray="1 1" class="c"/>
<line x1="56.5" y1="271" x2="56.5" y2="331" stroke="#787878" stroke-width="1" stroke-dasharray="1 1" class="c"/>
<line x1="98.5" y1="271" x2="98.5" y2="331" stroke="#787878" stroke-width="1" stroke-dasharray="1 1" class="c"/>
<line x1="140.5" y1="271" x2="140.5" y2="331" stroke="#787878" stroke-width="1" stroke-dasharray="1 1" class="c"/>
<line x1="182.5" y1="271" x2="182.5" y2="331" stroke="#787878" stroke-width="1" stroke-dasharray="1 1" class="c"/>
<line x1="224.5" y1="271" x2="224.5" y2="331" stroke="#787878" stroke-width="1" stroke-dasharray="1 1" class="c"/>
<line x1="266.5" y1="271" x2="266.5" y2="331" stroke="#787878" stroke-width="1" stroke-dasharray="1 1" class="c"/>
<line x1="308.5" y1="271" x2="308.5" y2="331" stroke="#787878" stroke-width="1" stroke-dasharray="1 1" class="c"/>
<line x1="350.5" y1="271" x2="350.5" y2="331" stroke="#787878" stroke-width="1" stroke-dasharray="1 1" class="c"/>
<line x1="392.5" y1="271" x2="392.5" y2="331" stroke="#787878" stroke-width="1" stroke-dasharray="1 1" class="c"/>
<line x1="434.5" y1="271" x2="434.5" y2="331" stroke="#787878" stroke-width="1" stroke-dasharray="1 1" class="c"/>
<line x1="14.5" y1="347" x2="14.5" y2="410" stroke="#787878" stroke-width="1" stroke-dasharray="1 1" class="c"/>
<line x1="56.5" y1="347" x2="56.5" y2="410" stroke="#787878" stroke-width="1" stroke-dasharray="1 1" class="c"/>
<line x1="98.5" y1="347" x2="98.5" y2="410" stroke="#787878" stroke-width="1" stroke-dasharray="1 1" class="c"/>
<line x1="140.5" y1="347" x2="140.5" y2="410" stroke="#787878" stroke-width="1" stroke-dasharray="1 1" class="c"/>
<line x1="182.5" y1="347" x2="182.5" y2="410" stroke="#787878" stroke-width="1" stroke-dasharray="1 1" class="c"/>
<line x1="224.5" y1="347" x2="224.5" y2="410" stroke="#787878" stroke-width="1" stroke-dasharray="1 1" class="c"/>
<line x1="266.5" y1="347" x2="266.5" y2="410" stroke="#787878" stroke-width="1" stroke-dasharray="1 1" class="c"/>
<line x1="308.5" y1="347" x2="308.5" y2="410" stroke="#787878" stroke-width="1" stroke-dasharray="1 1" class="c"/>
<line x1="350.5" y1="347" x2="350.5" y2="410" stroke="#787878" stroke-width="1" stroke-dasharray="1 1" class="c"/>
<line x1="392.5" y1="347" x2="392.5" y2="410" stroke="#787878" stroke-width="1" stroke-dasharray="1 1" class="c"/>
<line x1="434.5" y1="347" x2="434.5" y2="410" stroke="#787878" stroke-width="1" stroke-dasharray="1 1" class="c"/>
<line x1="14.5" y1="423" x2="14.5" y2="505" stroke="#787878" stroke-width="1" stroke-dasharray="1 1" class="c"/>
<line x1="56.5" y1="423" x2="56.5" y2="505" stroke="#787878" stroke-width="1" stroke-dasharray="1 1" class="c"/>
<line x1="98.5" y1="423" x2="98.5" y2="505" stroke="#787878" stroke-width="1" stroke-dasharray="1 1" class="c"/>
<line x1="140.5" y1="423" x2="140.5" y2="505" stroke="#787878" stroke-width="1" stroke-dasharray="1 1" class="c"/>
<line x1="182.5" y1="423" x2="182.5" y2="505" stroke="#787878" stroke-width="1" stroke-dasharray="1 1" class="c"/>
<line x1="224.5" y1="423" x2="224.5" y2="505" stroke="#787878" stroke-width="1" stroke-dasharray="1 1" class="c"/>
<line x1="266.5" y1="423" x2="266.5" y2="505" stroke="#787878" stroke-width="1" stroke-dasharray="1 1" class="c"/>
<line x1="308.5" y1="423" x2="308.5" y2="505" stroke="#787878" stroke-width="1" stroke-dasharray="1 1" class="c"/>
<line x1="350.5" y1="423" x2="350.5" y2="505" stroke="#787878" stroke-width="1" stroke-dasharray="1 1" class="c"/>
<line x1="392.5" y1="423" x2="392.5" y2="505" stroke="#787878" stroke-width="1" stroke-dasharray="1 1" class="c"/>
<line x1="434.5" y1="423" x2="434.5" y2="505" stroke="#787878" stroke-width="1" stroke-dasharray="1 1" class="c"/>
<line x1="0" y1="112.5" x2="466" y2="112.5" stroke="#787878" stroke-width="1" stroke-dasharray="1 1" class="c"/>
<line x1="0" y1="154.5" x2="466" y2="154.5" stroke="#787878" stroke-width="1" stroke-dasharray="1 1" class="c"/>
<line x1="0" y1="195.5" x2="466" y2="195.5" stroke="#787878" stroke-width="1" stroke-dasharray="1 1" class="c"/>
<line x1="0" y1="237.5" x2="466" y2="237.5" stroke="#787878" stroke-width="1" stroke-dasharray="1 1" class="c"/>
<line x1="-12" y1="133.5" x2="462" y2="133.5" stroke="#606060" stroke-width="1" stroke-dasharray="3 12" class="c"/>
<line x1="-12" y1="174.5" x2="462" y2="174.5" stroke="#606060" stroke-width="1" stroke-dasharray="3 12" class="c"/>
<line x1="-12" y1="216.5" x2="462" y2="216.5" stroke="#606060" stroke-width="1" stroke-dasharray="3 12" class="c"/>
<line x1="0" y1="272.5" x2="466" y2="272.5" stroke="#787878" stroke-width="1" stroke-dasharray="1 1" class="c"/>
<line x1="0" y1="300.5" x2="466" y2="300.5" stroke="#787878" stroke-width="1" stroke-dasharray="1 1" class="c"/>
<line x1="0" y1="328.5" x2="466" y2="328.5" stroke="#787878" stroke-width="1" stroke-dasharray="1 1" class="c"/>
<line x1="0" y1="349.5" x2="466" y2="349.5" stroke="#787878" stroke-width="1" stroke-dasharray="1 1" class="c"/>
<line x1="0" y1="377.5" x2="466" y2="377.5" stroke="#787878" stroke-width="1" stroke-dasharray="1 1" class="c"/>
<line x1="0" y1="405.5" x2="466" y2="405.5" stroke="#787878" stroke-width="1" stroke-dasharray="1 1" class="c"/>
<line x1="0" y1="447.5" x2="466" y2="447.5" stroke="#787878" stroke-width="1" stroke-dasharray="1 1" class="c"/>
<line x1="0" y1="487.5" x2="466" y2="487.5" stroke="#787878" stroke-width="1" stroke-dasharray="1 1" class="c"/>
<line x1="-12" y1="426.5" x2="462" y2="426.5" stroke="#606060" stroke-width="1" stroke-dasharray="3 12" class="c"/>
<line x1="-12" y1="467.5" x2="462" y2="467.5" stroke="#606060" stroke-width="1" stroke-dasharray="3 12" class="c"/>
<path d="M13 121.7 V130 M5.5 126 H13 M13 126 H20.5" stroke="#30f0f0" stroke-width="2" fill="none" class="c"/>
<path d="M34 114 V128.5 M26.5 128 H34 M34 117.5 H41.5" stroke="#20a020" stroke-width="2" fill="none" class="c"/>
<path d="M55 119 V141.5 M47.5 119.5 H55 M55 141 H62.5" stroke="#ff1818" stroke-width="2" fill="none" class="c"/>
<path d="M76 131 V143 M68.5 136.7 H76 M76 142.5 H83.5" stroke="#ff1818" stroke-width="2" fill="none" class="c"/>
<path d="M97 135 V141.5 M89.5 141 H97 M97 141 H104.5" stroke="#30f0f0" stroke-width="2" fill="none" class="c"/>
<path d="M118 138 V151 M110.5 143 H118 M118 145 H125.5" stroke="#ff1818" stroke-width="2" fill="none" class="c"/>
<path d="M139 146 V155 M131.5 147.5 H139 M139 147.5 H146.5" stroke="#30f0f0" stroke-width="2" fill="none" class="c"/>
<path d="M160 143 V150 M152.5 145 H160 M160 147 H167.5" stroke="#ff1818" stroke-width="2" fill="none" class="c"/>
<path d="M181 144 V155.5 M173.5 148.7 H181 M181 154.5 H188.5" stroke="#ff1818" stroke-width="2" fill="none" class="c"/>
<path d="M202 149 V159.5 M194.5 153 H202 M202 158 H209.5" stroke="#ff1818" stroke-width="2" fill="none" class="c"/>
<path d="M223 152.5 V166 M215.5 153 H223 M223 161 H230.5" stroke="#ff1818" stroke-width="2" fill="none" class="c"/>
<path d="M244 165.5 V180.5 M236.5 166 H244 M244 178 H251.5" stroke="#ff1818" stroke-width="2" fill="none" class="c"/>
<path d="M265 164.5 V179.5 M257.5 175 H265 M265 167.5 H272.5" stroke="#20d020" stroke-width="2" fill="none" class="c"/>
<path d="M286 155.5 V167.5 M278.5 166 H286 M286 164 H293.5" stroke="#20d020" stroke-width="2" fill="none" class="c"/>
<path d="M307 153 V165.5 M299.5 161 H307 M307 158 H314.5" stroke="#20d020" stroke-width="2" fill="none" class="c"/>
<path d="M328 154.5 V175 M320.5 160 H328 M328 155 H335.5" stroke="#20d020" stroke-width="2" fill="none" class="c"/>
<path d="M349 173.5 V177.5 M341.5 175.5 H349 M349 175.5 H356.5" stroke="#30f0f0" stroke-width="2" fill="none" class="c"/>
<path d="M370 173.5 V177.5 M362.5 175.5 H370 M370 175.5 H377.5" stroke="#30f0f0" stroke-width="2" fill="none" class="c"/>
<path d="M391 190.5 V249.5 M383.5 249 H391 M391 191 H398.5" stroke="#20d020" stroke-width="2" fill="none" class="c"/>
<path d="M412 178 V202.5 M404.5 194.5 H412 M412 187 H419.5" stroke="#20d020" stroke-width="2" fill="none" class="c"/>
<polyline points="0,287 34,278 55,291 76,309.5 97,319.5 118,324.5 139,326.7 160,327 190,327.5 192,328 250,328 328,315 370,321 412,313" stroke="#3fe0e0" stroke-width="1.1" fill="none" />
<polyline points="0,359.5 14,355 34,354 45,357.5 97,383 140,387 175,393.5 210,401 235,403 290,395 328,385.5 340,385 370,392 391,390.5 412,382.5" stroke="#ffa030" stroke-width="1.1" fill="none" />
<polyline points="0,360.7 34,357 55,358 76,363.7 97,373.7 140,385 190,392.5 218,398 245,401 290,396 335,389 349,387.5 391,390.5 412,388" stroke="#3fe0e0" stroke-width="1.1" fill="none" />
<rect x="-18" y="487" width="21" height="6" fill="#8c0808" class="c"/>
<rect x="2" y="487" width="1" height="6" fill="#700000" class="c"/>
<rect x="3" y="487" width="21" height="6" fill="#8c0808" class="c"/>
<rect x="23" y="487" width="1" height="6" fill="#700000" class="c"/>
<rect x="24" y="487" width="21" height="6" fill="#8c0808" class="c"/>
<rect x="44" y="487" width="1" height="6" fill="#700000" class="c"/>
<rect x="45" y="487" width="21" height="6" fill="#8c0808" class="c"/>
<rect x="65" y="487" width="1" height="6" fill="#700000" class="c"/>
<rect x="66" y="487" width="21" height="6.5" fill="#8c0808" class="c"/>
<rect x="86" y="487" width="1" height="6.5" fill="#700000" class="c"/>
<rect x="87" y="487" width="21" height="6.5" fill="#8c0808" class="c"/>
<rect x="107" y="487" width="1" height="6.5" fill="#700000" class="c"/>
<rect x="108" y="487" width="21" height="7" fill="#8c0808" class="c"/>
<rect x="128" y="487" width="1" height="7" fill="#700000" class="c"/>
<rect x="129" y="487" width="21" height="7.5" fill="#8c0808" class="c"/>
<rect x="149" y="487" width="1" height="7.5" fill="#700000" class="c"/>
<rect x="150" y="487" width="21" height="7.5" fill="#8c0808" class="c"/>
<rect x="170" y="487" width="1" height="7.5" fill="#700000" class="c"/>
<rect x="171" y="487" width="21" height="7.5" fill="#8c0808" class="c"/>
<rect x="191" y="487" width="1" height="7.5" fill="#700000" class="c"/>
<rect x="192" y="487" width="21" height="8" fill="#8c0808" class="c"/>
<rect x="212" y="487" width="1" height="8" fill="#700000" class="c"/>
<rect x="213" y="487" width="21" height="8.5" fill="#8c0808" class="c"/>
<rect x="233" y="487" width="1" height="8.5" fill="#700000" class="c"/>
<rect x="234" y="487" width="21" height="8.5" fill="#8c0808" class="c"/>
<rect x="254" y="487" width="1" height="8.5" fill="#700000" class="c"/>
<rect x="255" y="487" width="21" height="8" fill="#8c0808" class="c"/>
<rect x="275" y="487" width="1" height="8" fill="#700000" class="c"/>
<rect x="276" y="487" width="21" height="7.5" fill="#8c0808" class="c"/>
<rect x="296" y="487" width="1" height="7.5" fill="#700000" class="c"/>
<rect x="297" y="487" width="21" height="7" fill="#8c0808" class="c"/>
<rect x="317" y="487" width="1" height="7" fill="#700000" class="c"/>
<rect x="318" y="487" width="21" height="6.5" fill="#8c0808" class="c"/>
<rect x="338" y="487" width="1" height="6.5" fill="#700000" class="c"/>
<rect x="339" y="487" width="21" height="6.5" fill="#8c0808" class="c"/>
<rect x="359" y="487" width="1" height="6.5" fill="#700000" class="c"/>
<rect x="360" y="487" width="21" height="6.5" fill="#8c0808" class="c"/>
<rect x="380" y="487" width="1" height="6.5" fill="#700000" class="c"/>
<rect x="381" y="487" width="21" height="6" fill="#8c0808" class="c"/>
<rect x="401" y="487" width="1" height="6" fill="#700000" class="c"/>
<rect x="402" y="487" width="21" height="6" fill="#8c0808" class="c"/>
<rect x="422" y="487" width="1" height="6" fill="#700000" class="c"/>
<polyline points="0,452.5 218,468.7 412,485.5" stroke="#ffa030" stroke-width="1.1" fill="none" />
<polyline points="0,458.7 218,478 412,491" stroke="#3fe0e0" stroke-width="1.1" fill="none" />
<rect x="466" y="112" width="1" height="142" fill="#d8c890" class="c"/>
<rect x="466" y="112" width="51" height="1" fill="#c8c0a0" class="c"/>
<rect x="516" y="112" width="1" height="142" fill="#3038a0" class="c"/>
<rect x="466" y="253" width="51" height="1" fill="#3840a8" class="c"/>
<rect x="466" y="270" width="1" height="60" fill="#d8c890" class="c"/>
<rect x="466" y="270" width="51" height="1" fill="#c8c0a0" class="c"/>
<rect x="516" y="270" width="1" height="60" fill="#3038a0" class="c"/>
<rect x="466" y="329" width="51" height="1" fill="#3840a8" class="c"/>
<rect x="466" y="347" width="1" height="60" fill="#d8c890" class="c"/>
<rect x="466" y="347" width="51" height="1" fill="#c8c0a0" class="c"/>
<rect x="516" y="347" width="1" height="60" fill="#3038a0" class="c"/>
<rect x="466" y="406" width="51" height="1" fill="#3840a8" class="c"/>
<rect x="466" y="424" width="1" height="78" fill="#d8c890" class="c"/>
<rect x="466" y="424" width="51" height="1" fill="#c8c0a0" class="c"/>
<rect x="516" y="424" width="1" height="78" fill="#3038a0" class="c"/>
<rect x="466" y="501" width="51" height="1" fill="#3840a8" class="c"/>
<rect x="462" y="112" width="4" height="1" fill="#f0f0f0" class="c"/>
<rect x="464" y="116" width="2" height="1" fill="#f0f0f0" class="c"/>
<rect x="464" y="120" width="2" height="1" fill="#f0f0f0" class="c"/>
<rect x="464" y="124" width="2" height="1" fill="#f0f0f0" class="c"/>
<rect x="464" y="129" width="2" height="1" fill="#f0f0f0" class="c"/>
<rect x="464" y="133" width="2" height="1" fill="#f0f0f0" class="c"/>
<rect x="464" y="137" width="2" height="1" fill="#f0f0f0" class="c"/>
<rect x="464" y="141" width="2" height="1" fill="#f0f0f0" class="c"/>
<rect x="464" y="145" width="2" height="1" fill="#f0f0f0" class="c"/>
<rect x="464" y="149" width="2" height="1" fill="#f0f0f0" class="c"/>
<rect x="462" y="153" width="4" height="1" fill="#f0f0f0" class="c"/>
<rect x="464" y="157" width="2" height="1" fill="#f0f0f0" class="c"/>
<rect x="464" y="162" width="2" height="1" fill="#f0f0f0" class="c"/>
<rect x="464" y="166" width="2" height="1" fill="#f0f0f0" class="c"/>
<rect x="464" y="170" width="2" height="1" fill="#f0f0f0" class="c"/>
<rect x="464" y="174" width="2" height="1" fill="#f0f0f0" class="c"/>
<rect x="464" y="178" width="2" height="1" fill="#f0f0f0" class="c"/>
<rect x="464" y="182" width="2" height="1" fill="#f0f0f0" class="c"/>
<rect x="464" y="186" width="2" height="1" fill="#f0f0f0" class="c"/>
<rect x="464" y="190" width="2" height="1" fill="#f0f0f0" class="c"/>
<rect x="462" y="195" width="4" height="1" fill="#f0f0f0" class="c"/>
<rect x="464" y="199" width="2" height="1" fill="#f0f0f0" class="c"/>
<rect x="464" y="203" width="2" height="1" fill="#f0f0f0" class="c"/>
<rect x="464" y="207" width="2" height="1" fill="#f0f0f0" class="c"/>
<rect x="464" y="211" width="2" height="1" fill="#f0f0f0" class="c"/>
<rect x="464" y="215" width="2" height="1" fill="#f0f0f0" class="c"/>
<rect x="464" y="219" width="2" height="1" fill="#f0f0f0" class="c"/>
<rect x="464" y="224" width="2" height="1" fill="#f0f0f0" class="c"/>
<rect x="464" y="228" width="2" height="1" fill="#f0f0f0" class="c"/>
<rect x="464" y="232" width="2" height="1" fill="#f0f0f0" class="c"/>
<rect x="462" y="236" width="4" height="1" fill="#f0f0f0" class="c"/>
<rect x="464" y="240" width="2" height="1" fill="#f0f0f0" class="c"/>
<rect x="464" y="244" width="2" height="1" fill="#f0f0f0" class="c"/>
<rect x="464" y="248" width="2" height="1" fill="#f0f0f0" class="c"/>
<rect x="464" y="252" width="2" height="1" fill="#f0f0f0" class="c"/>
<rect x="462" y="272" width="4" height="1" fill="#f0f0f0" class="c"/>
<rect x="464" y="278" width="2" height="1" fill="#f0f0f0" class="c"/>
<rect x="464" y="283" width="2" height="1" fill="#f0f0f0" class="c"/>
<rect x="464" y="289" width="2" height="1" fill="#f0f0f0" class="c"/>
<rect x="464" y="294" width="2" height="1" fill="#f0f0f0" class="c"/>
<rect x="462" y="300" width="4" height="1" fill="#f0f0f0" class="c"/>
<rect x="464" y="305" width="2" height="1" fill="#f0f0f0" class="c"/>
<rect x="464" y="311" width="2" height="1" fill="#f0f0f0" class="c"/>
<rect x="464" y="316" width="2" height="1" fill="#f0f0f0" class="c"/>
<rect x="464" y="322" width="2" height="1" fill="#f0f0f0" class="c"/>
<rect x="462" y="328" width="4" height="1" fill="#f0f0f0" class="c"/>
<rect x="462" y="349" width="4" height="1" fill="#f0f0f0" class="c"/>
<rect x="464" y="355" width="2" height="1" fill="#f0f0f0" class="c"/>
<rect x="464" y="360" width="2" height="1" fill="#f0f0f0" class="c"/>
<rect x="464" y="366" width="2" height="1" fill="#f0f0f0" class="c"/>
<rect x="464" y="371" width="2" height="1" fill="#f0f0f0" class="c"/>
<rect x="462" y="377" width="4" height="1" fill="#f0f0f0" class="c"/>
<rect x="464" y="383" width="2" height="1" fill="#f0f0f0" class="c"/>
<rect x="464" y="388" width="2" height="1" fill="#f0f0f0" class="c"/>
<rect x="464" y="394" width="2" height="1" fill="#f0f0f0" class="c"/>
<rect x="464" y="399" width="2" height="1" fill="#f0f0f0" class="c"/>
<rect x="462" y="405" width="4" height="1" fill="#f0f0f0" class="c"/>
<rect x="462" y="426" width="4" height="1" fill="#f0f0f0" class="c"/>
<rect x="464" y="430" width="2" height="1" fill="#f0f0f0" class="c"/>
<rect x="464" y="434" width="2" height="1" fill="#f0f0f0" class="c"/>
<rect x="464" y="438" width="2" height="1" fill="#f0f0f0" class="c"/>
<rect x="464" y="442" width="2" height="1" fill="#f0f0f0" class="c"/>
<rect x="462" y="446" width="4" height="1" fill="#f0f0f0" class="c"/>
<rect x="464" y="451" width="2" height="1" fill="#f0f0f0" class="c"/>
<rect x="464" y="455" width="2" height="1" fill="#f0f0f0" class="c"/>
<rect x="464" y="459" width="2" height="1" fill="#f0f0f0" class="c"/>
<rect x="464" y="463" width="2" height="1" fill="#f0f0f0" class="c"/>
<rect x="462" y="467" width="4" height="1" fill="#f0f0f0" class="c"/>
<rect x="464" y="471" width="2" height="1" fill="#f0f0f0" class="c"/>
<rect x="464" y="475" width="2" height="1" fill="#f0f0f0" class="c"/>
<rect x="464" y="479" width="2" height="1" fill="#f0f0f0" class="c"/>
<rect x="464" y="483" width="2" height="1" fill="#f0f0f0" class="c"/>
<rect x="462" y="487" width="4" height="1" fill="#f0f0f0" class="c"/>
<rect x="464" y="492" width="2" height="1" fill="#f0f0f0" class="c"/>
<rect x="464" y="496" width="2" height="1" fill="#f0f0f0" class="c"/>
<rect x="464" y="500" width="2" height="1" fill="#f0f0f0" class="c"/>
<text x="515" y="159" font-size="11.6" fill="#f3f0b4" text-anchor="end"  textLength="38.8" lengthAdjust="spacingAndGlyphs" stroke="#f3f0b4" stroke-width=".3">6150,00</text>
<text x="515" y="200.5" font-size="11.6" fill="#f3f0b4" text-anchor="end"  textLength="38.8" lengthAdjust="spacingAndGlyphs" stroke="#f3f0b4" stroke-width=".3">6140,00</text>
<text x="515" y="242" font-size="11.6" fill="#f3f0b4" text-anchor="end"  textLength="38.8" lengthAdjust="spacingAndGlyphs" stroke="#f3f0b4" stroke-width=".3">6130,00</text>
<rect x="467" y="151" width="41" height="13" fill="#8c8c8c" />
<text x="468.3" y="162.2" font-size="11.6" fill="#202020" text-anchor="start"  textLength="38.8" lengthAdjust="spacingAndGlyphs" stroke="#202020" stroke-width=".3">6149,37</text>
<rect x="467" y="181" width="41" height="13" fill="#ffff20" />
<text x="468.3" y="192.2" font-size="11.6" fill="#000" text-anchor="start"  textLength="38.8" lengthAdjust="spacingAndGlyphs" stroke="#000" stroke-width=".3">6142,15</text>
<text x="515" y="280.8" font-size="11.6" fill="#f3f0b4" text-anchor="end"  textLength="44.7" lengthAdjust="spacingAndGlyphs" stroke="#f3f0b4" stroke-width=".3">100,0000</text>
<text x="515" y="304.5" font-size="11.6" fill="#f3f0b4" text-anchor="end"  textLength="38.8" lengthAdjust="spacingAndGlyphs" stroke="#f3f0b4" stroke-width=".3">50,0000</text>
<text x="515" y="328.5" font-size="11.6" fill="#f3f0b4" text-anchor="end"  stroke="#f3f0b4" stroke-width=".3">0</text>
<rect x="467" y="307" width="41" height="13" fill="#28e8e8" />
<text x="468.3" y="318.2" font-size="11.6" fill="#003838" text-anchor="start"  textLength="38.8" lengthAdjust="spacingAndGlyphs" stroke="#003838" stroke-width=".3">26,9606</text>
<text x="515" y="357.6" font-size="11.6" fill="#f3f0b4" text-anchor="end"  textLength="44.7" lengthAdjust="spacingAndGlyphs" stroke="#f3f0b4" stroke-width=".3">100,0000</text>
<text x="515" y="381" font-size="11.6" fill="#f3f0b4" text-anchor="end"  textLength="38.8" lengthAdjust="spacingAndGlyphs" stroke="#f3f0b4" stroke-width=".3">50,0000</text>
<text x="515" y="405.5" font-size="11.6" fill="#f3f0b4" text-anchor="end"  stroke="#f3f0b4" stroke-width=".3">0</text>
<rect x="467" y="376" width="41" height="8" fill="#ffa030" />
<text x="468.3" y="386.6" font-size="11.6" fill="#402000" text-anchor="start"  textLength="38.8" lengthAdjust="spacingAndGlyphs" stroke="#402000" stroke-width=".3">41,6648</text>
<rect x="467" y="381.5" width="41" height="13" fill="#28e8e8" />
<text x="468.3" y="392.7" font-size="11.6" fill="#003838" text-anchor="start"  textLength="38.8" lengthAdjust="spacingAndGlyphs" stroke="#003838" stroke-width=".3">30,2324</text>
<text x="515" y="451.5" font-size="11.6" fill="#f3f0b4" text-anchor="end"  textLength="38.8" lengthAdjust="spacingAndGlyphs" stroke="#f3f0b4" stroke-width=".3">10,0000</text>
<text x="515" y="491" font-size="11.6" fill="#f3f0b4" text-anchor="end"  stroke="#f3f0b4" stroke-width=".3">0</text>
<rect x="467" y="487" width="38" height="10.5" fill="#28e8e8" />
<text x="468.3" y="496.5" font-size="11.6" fill="#003838" text-anchor="start"  textLength="36.4" lengthAdjust="spacingAndGlyphs" stroke="#003838" stroke-width=".3">-0,8616</text>
<rect x="467" y="479" width="35" height="12.5" fill="#ffa030" />
<text x="468.3" y="489.7" font-size="11.6" fill="#402000" text-anchor="start"  textLength="32.8" lengthAdjust="spacingAndGlyphs" stroke="#402000" stroke-width=".3">0,6342</text>
<text x="433" y="108.8" font-size="11.8" fill="#30c838" text-anchor="start" textLength="29.5" lengthAdjust="spacingAndGlyphs" stroke="#30c838" stroke-width=".3">5 mins</text>
<rect x="502" y="98" width="15" height="5" fill="#ece8dc" class="c"/>
<rect x="502" y="102" width="15" height="1" fill="#a0a0a0" class="c"/>
<rect x="0" y="504.1" width="466" height="1" fill="#f0ec98" />
<rect x="14" y="502" width="1" height="3" fill="#f0f060" class="c"/>
<rect x="56" y="502" width="1" height="3" fill="#f0f060" class="c"/>
<rect x="98" y="502" width="1" height="3" fill="#f0f060" class="c"/>
<rect x="140" y="502" width="1" height="3" fill="#f0f060" class="c"/>
<rect x="182" y="502" width="1" height="3" fill="#f0f060" class="c"/>
<rect x="224" y="502" width="1" height="3" fill="#f0f060" class="c"/>
<rect x="266" y="502" width="1" height="3" fill="#f0f060" class="c"/>
<rect x="308" y="502" width="1" height="3" fill="#f0f060" class="c"/>
<rect x="350" y="502" width="1" height="3" fill="#f0f060" class="c"/>
<rect x="392" y="502" width="1" height="3" fill="#f0f060" class="c"/>
<rect x="434" y="502" width="1" height="3" fill="#f0f060" class="c"/>
<text x="14.5" y="518" font-size="12.4" fill="#f4f0a8" text-anchor="middle" stroke="none">20:40</text>
<text x="56.5" y="518" font-size="12.4" fill="#f4f0a8" text-anchor="middle" stroke="none">20:50</text>
<text x="98.5" y="518" font-size="12.4" fill="#f4f0a8" text-anchor="middle" stroke="none">21:00</text>
<text x="140.5" y="518" font-size="12.4" fill="#f4f0a8" text-anchor="middle" stroke="none">21:10</text>
<text x="182.5" y="518" font-size="12.4" fill="#f4f0a8" text-anchor="middle" stroke="none">21:20</text>
<text x="224.5" y="518" font-size="12.4" fill="#f4f0a8" text-anchor="middle" stroke="none">21:30</text>
<text x="266.5" y="518" font-size="12.4" fill="#f4f0a8" text-anchor="middle" stroke="none">21:40</text>
<text x="308.5" y="518" font-size="12.4" fill="#f4f0a8" text-anchor="middle" stroke="none">21:50</text>
<text x="350.5" y="518" font-size="12.4" fill="#f4f0a8" text-anchor="middle" stroke="none">22:00</text>
<text x="392.5" y="518" font-size="12.4" fill="#f4f0a8" text-anchor="middle" stroke="none">Mi</text>
<text x="434.5" y="518" font-size="12.4" fill="#f4f0a8" text-anchor="middle" stroke="none">08:10</text>
<rect x="466" y="502" width="52" height="21" fill="#f6f6f6" class="c"/>
<path d="M484.5 518.5 L497 506.5" stroke="#10107a" stroke-width="1.2"/>
<path d="M491 512.5 L495.5 508.7 L500 511.5 L498 516.8 Q494 518.5 491 512.5 Z" fill="#1838c8" stroke="#0a1470" stroke-width=".5"/>
</g>
<rect x="0" y="523" width="518" height="17" fill="#ececec" class="c"/>
<rect x="0" y="523" width="518" height="1" fill="#f8f8f8" class="c"/>
<rect x="464.5" y="524.5" width="35" height="14" rx="2" fill="url(#gthumb)" stroke="#8c8c8c"/>
<rect x="478" y="528" width="1" height="7" fill="#505050" class="c"/>
<rect x="479" y="528" width="1" height="7" fill="#fafafa" class="c"/>
<rect x="481" y="528" width="1" height="7" fill="#505050" class="c"/>
<rect x="482" y="528" width="1" height="7" fill="#fafafa" class="c"/>
<rect x="484" y="528" width="1" height="7" fill="#505050" class="c"/>
<rect x="485" y="528" width="1" height="7" fill="#fafafa" class="c"/>
<path d="M507.5 527.5 L511.5 531.5 L507.5 535.5 Z" fill="#404040"/>
</svg></body></html>
